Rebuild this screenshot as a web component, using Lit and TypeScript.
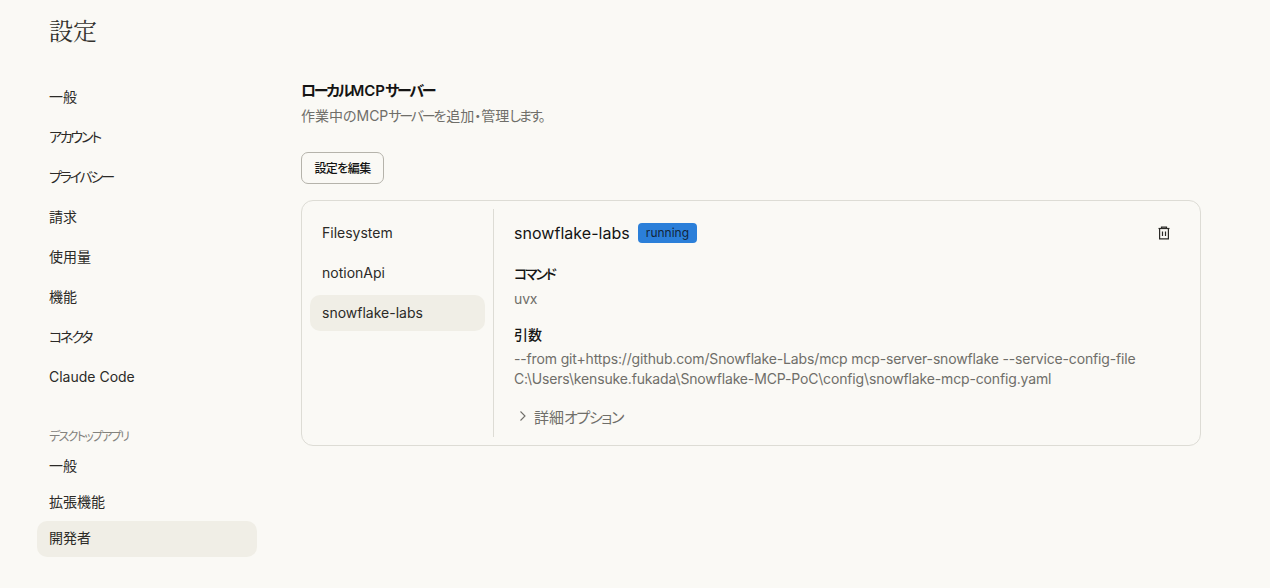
import { LitElement, html, css } from "lit";
import { customElement } from "lit/decorators.js";

@customElement("app-root")
export class AppRoot extends LitElement {
  static styles = css`
    :host {
      display: block;
      width: 1270px;
      height: 588px;
      overflow: hidden;
      background: #faf9f5;
      color: #1f1e1b;
      font-family: Inter, "Noto Sans CJK JP", sans-serif;
      font-size: 14px;
      font-feature-settings: "palt";
    }
    .kana {
      letter-spacing: -2.2px;
    }
    .title {
      height: 64px;
      padding-left: 49px;
      font-family: "Noto Serif CJK JP", "Noto Sans CJK JP", serif;
      font-size: 24px;
      font-weight: 400;
      line-height: 60px;
      color: #33322e;
    }
    .page {
      display: flex;
    }
    .side {
      width: 220px;
      margin: 15px 0 0 37px;
      flex: none;
    }
    .group {
      display: flex;
      flex-direction: column;
      gap: 4px;
    }
    .group.tight {
      gap: 0;
    }
    .item {
      height: 36px;
      line-height: 36px;
      padding-left: 12px;
      border-radius: 10px;
      color: #2b2a27;
    }
    .tight .item {
      line-height: 34px;
    }
    .item.sel {
      background: #f0eee6;
    }
    .label {
      margin-top: 33px;
      height: 18px;
      line-height: 18px;
      padding-left: 12px;
      font-size: 12px;
      color: #83827d;
      margin-bottom: 3px;
      letter-spacing: -1.7px;
    }
    .main {
      margin: 15px 0 0 44px;
      width: 900px;
    }
    h2 {
      margin: 0;
      font-size: 15px;
      line-height: 24px;
      font-weight: 600;
      color: #141413;
    }
    .sub {
      margin-top: 1px;
      font-size: 14px;
      line-height: 24px;
      color: #6f6e69;
    }
    .btn {
      display: block;
      margin-top: 24px;
      width: 83px;
      height: 32px;
      box-sizing: border-box;
      border: 1px solid #b5b3ab;
      border-radius: 7px;
      background: transparent;
      font: inherit;
      font-size: 12px;
      font-weight: 500;
      letter-spacing: -0.6px;
      color: #141413;
      padding: 0 0 2px;
    }
    .card {
      margin-top: 16px;
      height: 246px;
      box-sizing: border-box;
      border: 1px solid #dddcd5;
      border-radius: 12px;
      padding: 8px;
      display: flex;
    }
    .list {
      width: 183px;
      flex: none;
      border-right: 1px solid #dddcd5;
      display: flex;
      flex-direction: column;
      gap: 4px;
      padding-top: 6px;
    }
    .srv {
      width: 175px;
      height: 36px;
      line-height: 36px;
      box-sizing: border-box;
      padding-left: 12px;
      border-radius: 10px;
      color: #2b2a27;
    }
    .srv.sel {
      background: #f0eee6;
    }
    .detail {
      flex: 1;
      padding: 6px 20px 0 20px;
    }
    .head {
      display: flex;
      align-items: center;
      height: 36px;
    }
    .name {
      font-size: 16px;
      letter-spacing: 0.04px;
      color: #141413;
    }
    .badge {
      margin-left: 8px;
      background: #2b7fd9;
      color: #12253a;
      font-size: 12px;
      height: 20px;
      line-height: 20px;
      padding: 0 8px;
      border-radius: 4px;
    }
    .trash {
      margin-left: auto;
      display: block;
    }
    .k {
      font-size: 14px;
      font-weight: 500;
      line-height: 20px;
      color: #141413;
    }
    .v {
      font-size: 14px;
      line-height: 20px;
      color: #6f6e69;
      letter-spacing: -0.15px;
    }
    .cmd {
      margin-top: 13px;
    }
    .cmd .v {
      margin-top: 5px;
    }
    .args {
      margin-top: 16px;
    }
    .args .v {
      margin-top: 4px;
    }
    .more {
      margin-top: 15px;
      display: flex;
      align-items: center;
      height: 24px;
      color: #6f6e69;
      font-size: 15px;
      gap: 5px;
      padding-left: 3px;
    }
    .more .kana {
      letter-spacing: -1.4px;
    }
  `;

  render() {
    const k = (t: string) => html`<span class="kana">${t}</span>`;
    return html`
      <div class="title">設定</div>
      <div class="page">
        <nav class="side">
          <div class="group">
            <div class="item">一般</div>
            <div class="item">${k("アカウント")}</div>
            <div class="item">${k("プライバシー")}</div>
            <div class="item">請求</div>
            <div class="item">使用量</div>
            <div class="item">機能</div>
            <div class="item">${k("コネクタ")}</div>
            <div class="item">Claude Code</div>
          </div>
          <div class="label">デスクトップアプリ</div>
          <div class="group tight">
            <div class="item">一般</div>
            <div class="item">拡張機能</div>
            <div class="item sel">開発者</div>
          </div>
        </nav>
        <main class="main">
          <h2>${k("ローカル")}MCP${k("サーバー")}</h2>
          <div class="sub">作業中のMCP${k("サーバー")}を追加・管理${k("します。")}</div>
          <button class="btn">設定を編集</button>
          <section class="card">
            <div class="list">
              <div class="srv">Filesystem</div>
              <div class="srv">notionApi</div>
              <div class="srv sel">snowflake-labs</div>
            </div>
            <div class="detail">
              <div class="head">
                <span class="name">snowflake-labs</span>
                <span class="badge">running</span>
                <svg class="trash" width="16" height="16" viewBox="0 0 16 16" fill="none" stroke="#2b2a27" stroke-width="1.2">
                  <path d="M2.5 3.5h11" />
                  <path d="M5.5 3.5V2.2h5v1.3" />
                  <path d="M3.6 3.5v10.4h8.8V3.5" />
                  <path d="M6.5 6.5v4.5M9.5 6.5v4.5" />
                </svg>
              </div>
              <div class="cmd">
                <div class="k">${k("コマンド")}</div>
                <div class="v">uvx</div>
              </div>
              <div class="args">
                <div class="k">引数</div>
                <div class="v">--from git+https://github.com/Snowflake-Labs/mcp mcp-server-snowflake --service-config-file<br />C:\\Users\\kensuke.fukada\\Snowflake-MCP-PoC\\config\\snowflake-mcp-config.yaml</div>
              </div>
              <div class="more">
                <svg width="12" height="12" viewBox="0 0 12 12" fill="none" stroke="#6f6e69" stroke-width="1.1">
                  <path d="M3.5 1.5L8 6L3.5 10.5" />
                </svg>
                <span>詳細${k("オプション")}</span>
              </div>
            </div>
          </section>
        </main>
      </div>
    `;
  }
}
